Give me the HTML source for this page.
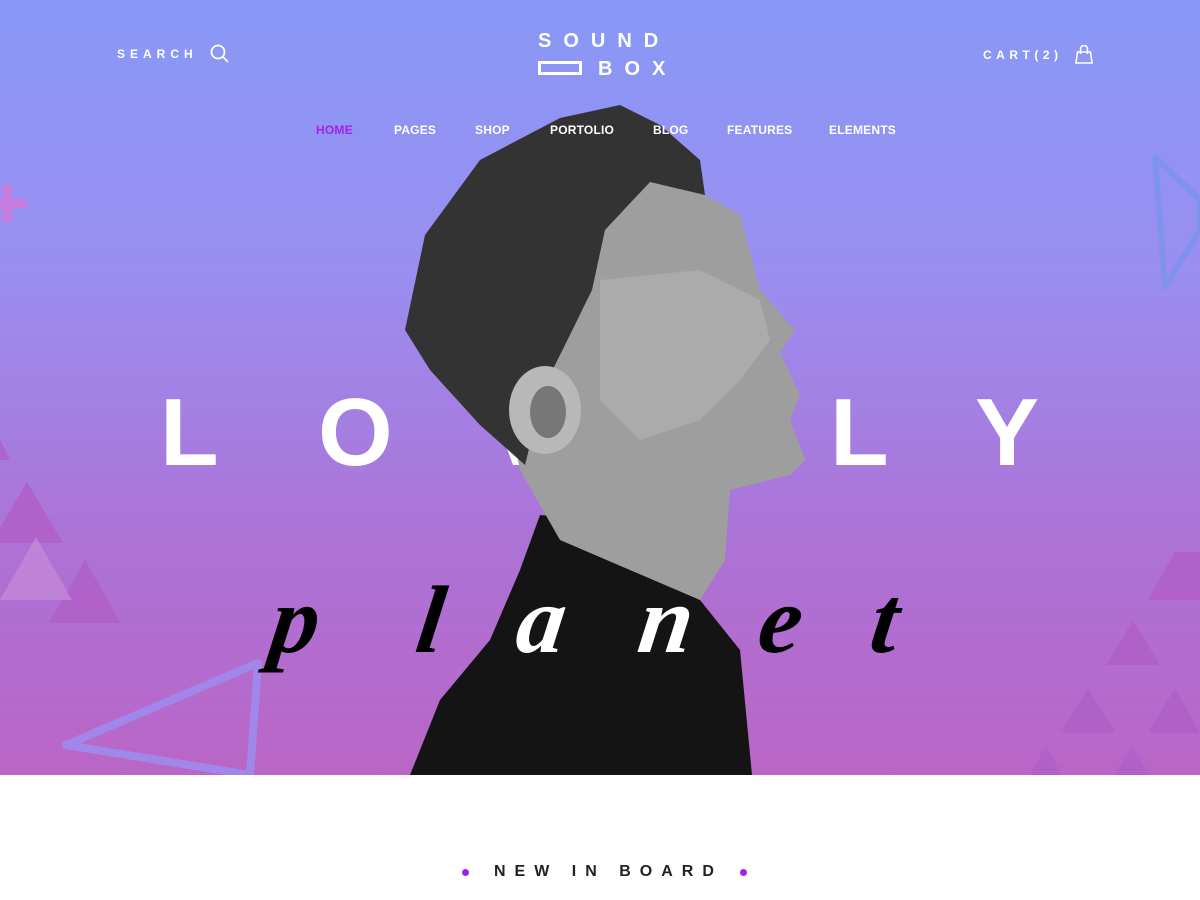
<!DOCTYPE html>
<html><head><meta charset="utf-8"><style>
*{margin:0;padding:0;box-sizing:border-box}
body{width:1200px;height:900px;overflow:hidden;background:#fff;font-family:"Liberation Sans",sans-serif;position:relative}
.hero{position:absolute;left:0;top:0;width:1200px;height:775px;background:linear-gradient(180deg,#8898f6 0%,#9a8ef0 35%,#ad72d6 70%,#b966c6 100%);overflow:hidden}
.a{position:absolute}
.top{color:#fff;font-weight:bold;font-size:12px;letter-spacing:5px}
.nav{top:123px;font-size:12px;color:#fff;font-weight:bold;letter-spacing:.2px}
.big{top:385px;font-size:96px;color:#fff;font-weight:bold;line-height:1}
.pl{top:572px;font-family:"Liberation Serif",serif;font-style:italic;font-weight:bold;font-size:96px;line-height:1;transform:skewX(-8deg)}
</style></head><body>
<div class="hero">
<svg class="a" style="left:0;top:0" width="1200" height="775">
<g fill="#b060c8" opacity=".85">
<polygon points="0,440 10,460 0,460"/>
<polygon points="27,482 63,543 -9,543"/>
<polygon points="85,560 121,623 49,623"/>
<polygon points="1175,552 1200,552 1200,600 1148,600"/>
<polygon points="1133,620 1160,665 1106,665"/>
<polygon points="1088,688 1116,733 1060,733"/>
<polygon points="1175,688 1200,733 1148,733"/>
<polygon points="1046,745 1062,775 1030,775"/>
<polygon points="1132,745 1150,775 1114,775"/>
</g>
<polygon points="36,537 72,600 0,600" fill="#c88ad8" opacity=".7"/>
<polygon points="258,663 250,775 66,745" fill="none" stroke="#a287ea" stroke-width="8" stroke-linejoin="round"/>
<polygon points="1155,157 1200,200 1200,230 1165,287" fill="none" stroke="#7f93ee" stroke-width="6" stroke-linejoin="round"/>
<rect x="0" y="198" width="27" height="10" fill="#c47ee0"/>
<rect x="2" y="185" width="10" height="37" fill="#c47ee0"/>
</svg>
<div class="a big" style="left:160px">L</div>
<div class="a big" style="left:318px">O</div>
<div class="a big" style="left:488px">V</div>
<div class="a big" style="left:660px">E</div>
<div class="a big" style="left:830px">L</div>
<div class="a big" style="left:975px">Y</div>
<svg class="a" style="left:0;top:0" width="1200" height="775">
<path d="M540,515 L600,520 L700,600 L740,650 L752,775 L410,775 L440,700 L490,640 L520,570 Z" fill="#141414"/>
<path d="M560,180 L660,170 L740,215 L760,290 L795,330 L780,352 L800,395 L790,420 L805,460 L790,475 L730,490 L725,560 L700,600 L560,540 L520,470 L505,400 L540,360 Z" fill="#9e9e9e"/>
<path d="M600,280 L700,270 L760,300 L770,340 L740,380 L700,420 L640,440 L600,400 Z" fill="#b4b4b4" opacity=".6"/>
<path d="M405,330 L425,235 L480,160 L560,118 L620,105 L660,125 L700,160 L705,195 L650,182 L605,230 L592,290 L565,345 L545,385 L525,465 L480,425 L430,370 Z" fill="#333"/>
<ellipse cx="545" cy="410" rx="36" ry="44" fill="#b8b8b8"/>
<ellipse cx="548" cy="412" rx="18" ry="26" fill="#777"/>
</svg>
<div class="a pl" style="left:272px;color:#000">p</div>
<div class="a pl" style="left:418px;color:#000">l</div>
<div class="a pl" style="left:518px;color:#fff">a</div>
<div class="a pl" style="left:640px;color:#fff">n</div>
<div class="a pl" style="left:760px;color:#000">e</div>
<div class="a pl" style="left:872px;color:#000">t</div>
<div class="a top" style="left:117px;top:47px">SEARCH</div>
<svg class="a" style="left:210px;top:44px" width="20" height="20"><circle cx="8" cy="8" r="6.5" fill="none" stroke="#fff" stroke-width="1.8"/><path d="M13,13l5,5" stroke="#fff" stroke-width="1.8"/></svg>
<div class="a" style="left:538px;top:30px;color:#fff;font-weight:bold;font-size:20px;letter-spacing:12px">SOUND</div>
<div class="a" style="left:538px;top:61px;width:44px;height:14px;border:3px solid #fff"></div>
<div class="a" style="left:598px;top:58px;color:#fff;font-weight:bold;font-size:20px;letter-spacing:12px">BOX</div>
<div class="a top" style="left:983px;top:48px;letter-spacing:4.5px">CART(2)</div>
<svg class="a" style="left:1074px;top:45px" width="20" height="20"><path d="M2,18L3.5,7H16.5L18,18Z" fill="none" stroke="#fff" stroke-width="1.6"/><path d="M6.5,9V4a3.5,3.5 0 0 1 7,0V9" fill="none" stroke="#fff" stroke-width="1.6"/></svg>
<div class="a nav" style="left:316px;color:#a41ef0">HOME</div>
<div class="a nav" style="left:394px">PAGES</div>
<div class="a nav" style="left:475px">SHOP</div>
<div class="a nav" style="left:550px">PORTOLIO</div>
<div class="a nav" style="left:653px">BLOG</div>
<div class="a nav" style="left:727px">FEATURES</div>
<div class="a nav" style="left:829px">ELEMENTS</div>
</div>
<div class="a" style="left:462px;top:869px;width:7px;height:7px;border-radius:50%;background:#a41ef0"></div>
<div class="a" style="left:740px;top:869px;width:7px;height:7px;border-radius:50%;background:#a41ef0"></div>
<div class="a" style="left:494px;top:863px;font-size:16px;font-weight:bold;letter-spacing:9px;color:#222">NEW IN BOARD</div>
</body></html>
